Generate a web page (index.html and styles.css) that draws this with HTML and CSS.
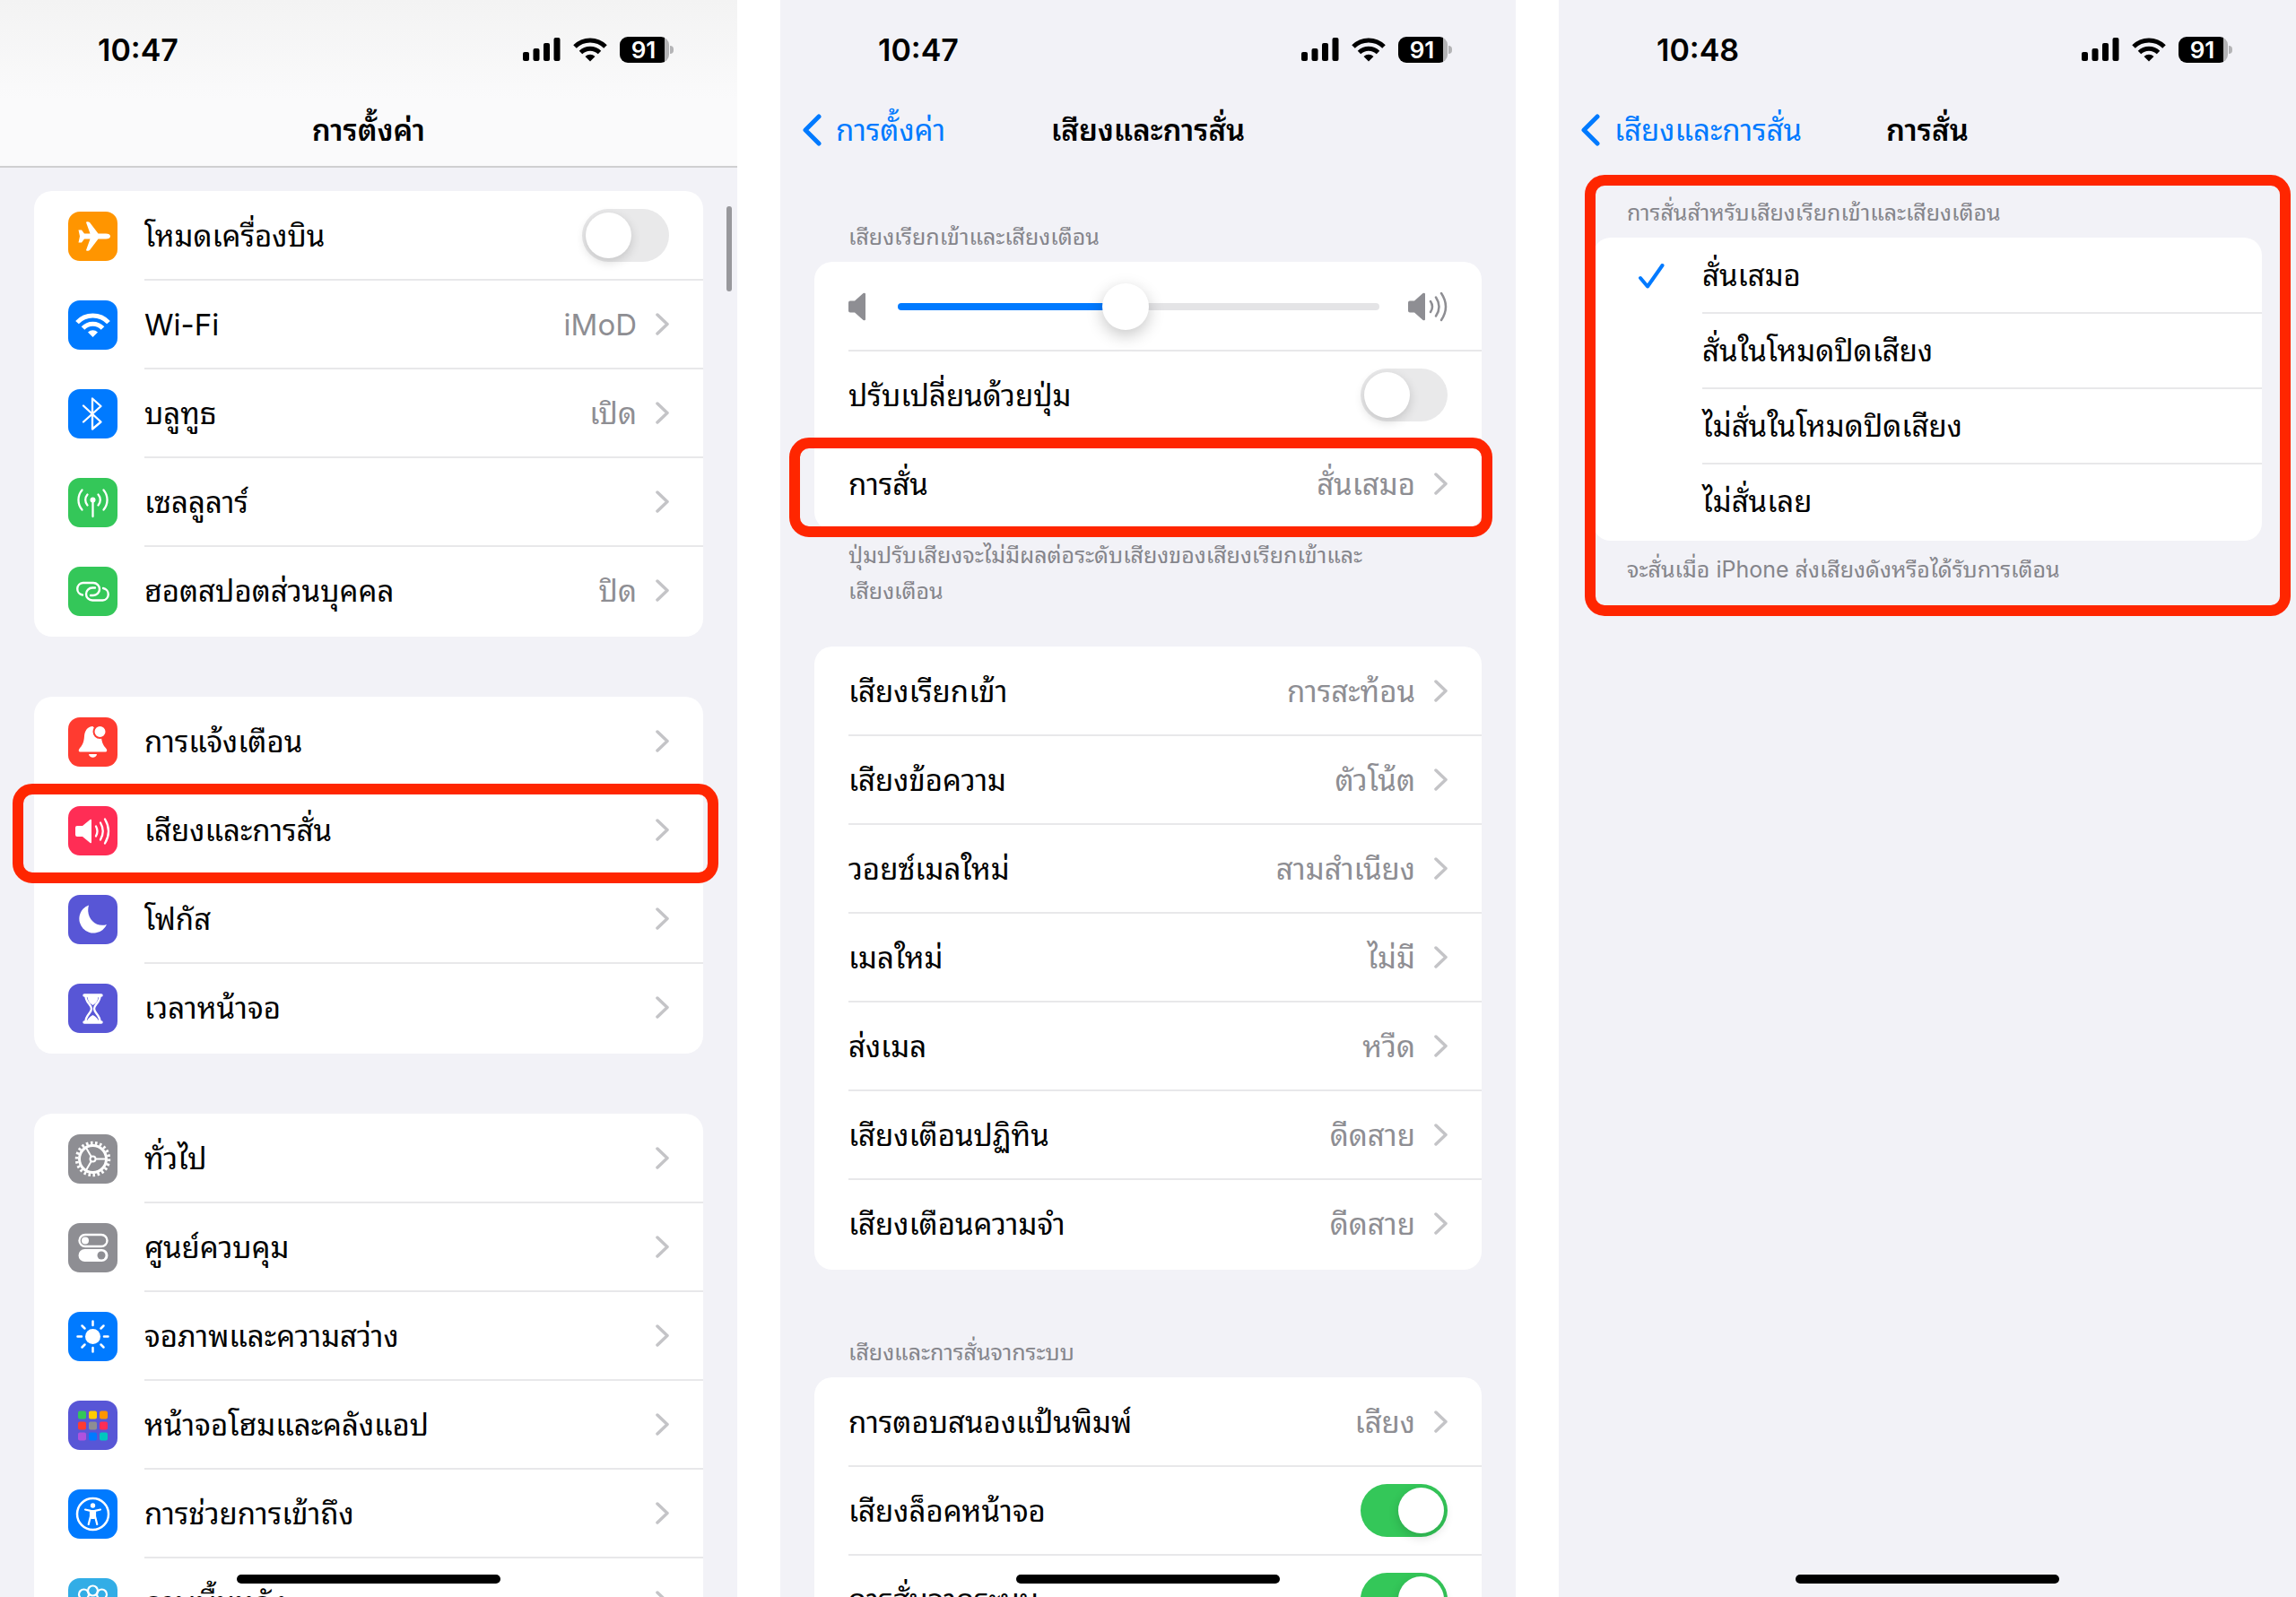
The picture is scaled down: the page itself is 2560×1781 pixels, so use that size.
FILE: index.html
```html
<!DOCTYPE html>
<html lang="th">

<head>
    <meta charset="UTF-8">
    <meta name="viewport" content="width=device-width, initial-scale=1.0">
    <title>การตั้งค่า - เสียงและการสั่น</title>
    <link rel="stylesheet" href="styles.css">
</head>

<body>
    <!-- Shared icons -->
    <svg class="sprite" aria-hidden="true">
        <symbol id="signal" viewBox="0 0 42 27">
            <rect x="0" y="16" width="7" height="10" rx="2" />
            <rect x="11.5" y="12" width="7" height="14" rx="2" />
            <rect x="23" y="6" width="7" height="20" rx="2" />
            <rect x="34.5" y="0" width="7" height="26" rx="2" />
        </symbol>
        <symbol id="wifi" viewBox="0 0 38 27">
            <g fill="none" stroke="currentColor" stroke-width="5">
                <path d="M2 10A24 24 0 0 1 36 10" />
                <path d="M8.5 16.5A15 15 0 0 1 29.5 16.5" />
            </g>
            <path d="M19 26.5l-5.5-5.5a8 8 0 0 1 11 0z" />
        </symbol>
        <symbol id="chevron" viewBox="0 0 15 25">
            <path d="M2 2l11 10.5L2 23" fill="none" stroke="currentColor" stroke-width="3.5" stroke-linecap="round" stroke-linejoin="round" />
        </symbol>
        <symbol id="back" viewBox="0 0 22 36">
            <path d="M19 3L4 18l15 15" fill="none" stroke="currentColor" stroke-width="5" stroke-linecap="round" stroke-linejoin="round" />
        </symbol>
    </svg>

    <main class="screens">
        <section class="screen">
            <header class="top-bar top-bar-scrolled">
                <div class="status">
                    <span class="time">10:47</span>
                    <span class="status-icons">
                        <svg class="signal"><use href="#signal" /></svg>
                        <svg class="wifi"><use href="#wifi" /></svg>
                        <span class="battery">91</span>
                    </span>
                </div>
                <nav class="nav">
                    <h1>การตั้งค่า</h1>
                </nav>
            </header>

            <div class="content content-main">
                <div class="card">
                    <label class="row">
                        <svg class="icon orange" viewBox="0 0 55 55"><path d="M47 27.5c0 2-2 3-5 3h-8.5l-9.5 12.5c-1 1-4 1-4 0l4.5-12.5h-6.5l-3 4h-3.5l1.5-7-1.5-7h3.5l3 4h6.5l-4.5-12.5c0-1 3-1 4 0l9.5 12.5h8.5c3 0 5 1 5 3z" /></svg>
                        <span class="row-body">โหมดเครื่องบิน <input class="switch" type="checkbox"></span>
                    </label>
                    <a class="row" href="#">
                        <svg class="icon blue" viewBox="0 0 55 55"><g fill="none" stroke="#fff" stroke-width="5"><path d="M10 24.6A24 24 0 0 1 45 24.6" /><path d="M16.5 31A15 15 0 0 1 38.5 31" /></g><path d="M27.5 41l-5.5-5.6a8 8 0 0 1 11 0z" /></svg>
                        <span class="row-body">Wi-Fi <span class="value">iMoD</span><svg class="chevron"><use href="#chevron" /></svg></span>
                    </a>
                    <a class="row" href="#">
                        <svg class="icon blue" viewBox="0 0 55 55"><path d="M17 18.5L36.5 36.5 27 44.5v-34l9.5 8.5L17 36.5" fill="none" stroke="#fff" stroke-width="2.3" stroke-linejoin="round" stroke-linecap="round" /></svg>
                        <span class="row-body">บลูทูธ <span class="value">เปิด</span><svg class="chevron"><use href="#chevron" /></svg></span>
                    </a>
                    <a class="row" href="#">
                        <svg class="icon green" viewBox="0 0 55 55"><circle cx="27.5" cy="24.5" r="3" /><path d="M27.5 25v18M21.5 18.5a9 9 0 0 0 0 12M15.5 13.5a17 17 0 0 0 0 22M33.5 18.5a9 9 0 0 1 0 12M39.5 13.5a17 17 0 0 1 0 22" fill="none" stroke="#fff" stroke-width="2.3" stroke-linecap="round" /></svg>
                        <span class="row-body">เซลลูลาร์ <svg class="chevron"><use href="#chevron" /></svg></span>
                    </a>
                    <a class="row" href="#">
                        <svg class="icon green" viewBox="0 0 55 55"><path d="M16 31.5A6.8 6.8 0 0 1 16.5 18h11.5a7 7 0 0 1 0 14h-3M39 24a6.8 6.8 0 0 1-.5 13.5H27a7 7 0 0 1 0-14h3" fill="none" stroke="#fff" stroke-width="2.4" stroke-linecap="round" /></svg>
                        <span class="row-body">ฮอตสปอตส่วนบุคคล <span class="value">ปิด</span><svg class="chevron"><use href="#chevron" /></svg></span>
                    </a>
                </div>

                <div class="card">
                    <a class="row" href="#">
                        <svg class="icon red" viewBox="0 0 55 55"><path d="M27.5 10c-6 0-9 5-9.5 11-.5 8-3 11-5.5 14-1.5 2-.5 3.5 1 3.5h28c1.5 0 2.5-1.5 1-3.5-2.5-3-5-6-5.5-13z" /><path d="M23 41h9c-.5 5-8.5 5-9 0z" /><circle cx="35.5" cy="16" r="7" fill="#fff" stroke="#ff3b30" stroke-width="2" /></svg>
                        <span class="row-body">การแจ้งเตือน <svg class="chevron"><use href="#chevron" /></svg></span>
                    </a>
                    <a class="row row-marked" href="#">
                        <svg class="icon pink" viewBox="0 0 55 55"><path d="M10 22h6l8.5-7q1.5-1 1.5 1v24q0 2-1.5 1l-8.5-7h-6q-2 0-2-2v-8q0-2 2-2z" /><path d="M31 22.5q3 5.5 0 11M36 18.5q5.5 9.5 0 19M41 14.5q8 13.5 0 27" fill="none" stroke="#fff" stroke-width="2.3" stroke-linecap="round" /></svg>
                        <span class="row-body">เสียงและการสั่น <svg class="chevron"><use href="#chevron" /></svg></span>
                        <span class="marker marker-row"></span>
                    </a>
                    <a class="row" href="#">
                        <svg class="icon indigo" viewBox="0 0 55 55"><path d="M23 11.5A16 16 0 1 0 43 33C31 37 19 26 23 11.5z" /></svg>
                        <span class="row-body">โฟกัส <svg class="chevron"><use href="#chevron" /></svg></span>
                    </a>
                    <a class="row" href="#">
                        <svg class="icon indigo" viewBox="0 0 55 55"><path d="M18 13h19M18 43h19" stroke="#fff" stroke-width="3.5" stroke-linecap="round" /><path d="M19.5 14c0 7 6.5 9.5 6.5 14s-6.5 7-6.5 14h16c0-7-6.5-9.5-6.5-14s6.5-7 6.5-14z" fill="none" stroke="#fff" stroke-width="2.4" /><path d="M21.500 14h12q0 7-6 10-6-3-6-10zM21 42q1-4 6.500-7 5.500 3 6.500 7z" /></svg>
                        <span class="row-body">เวลาหน้าจอ <svg class="chevron"><use href="#chevron" /></svg></span>
                    </a>
                </div>

                <div class="card">
                    <a class="row" href="#">
                        <svg class="icon gray" viewBox="0 0 55 55"><g fill="none" stroke="#fff"><circle cx="27.5" cy="27.5" r="15" stroke-width="3" /><circle cx="27.5" cy="27.5" r="18" stroke-width="3.5" pathLength="88" stroke-dasharray="2 2" /><circle cx="27.5" cy="27.5" r="3" stroke-width="2" /><path d="M31 27.5h11M25.5 24.5l-5.5-9.5M25.5 30.5l-5.5 9.5" stroke-width="2" /></g></svg>
                        <span class="row-body">ทั่วไป <svg class="chevron"><use href="#chevron" /></svg></span>
                    </a>
                    <a class="row" href="#">
                        <svg class="icon gray" viewBox="0 0 55 55"><rect x="12.5" y="13" width="31" height="13" rx="6.5" fill="none" stroke="#fff" stroke-width="2.4" /><circle cx="19" cy="19.5" r="4" /><rect x="11.5" y="29" width="33" height="14" rx="7" /><circle cx="37" cy="36" r="4.5" fill="#8e8e93" /></svg>
                        <span class="row-body">ศูนย์ควบคุม <svg class="chevron"><use href="#chevron" /></svg></span>
                    </a>
                    <a class="row" href="#">
                        <svg class="icon blue" viewBox="0 0 55 55"><circle cx="27.5" cy="27.5" r="8.5" /><path d="M27.5 10.5v4.5M27.5 40v4.5M10.5 27.5h4.5M40 27.5h4.5M15.5 15.5l3 3M36.5 36.5l3 3M15.5 39.5l3-3M36.5 18.5l3-3" stroke="#fff" stroke-width="2.5" stroke-linecap="round" /></svg>
                        <span class="row-body">จอภาพและความสว่าง <svg class="chevron"><use href="#chevron" /></svg></span>
                    </a>
                    <a class="row" href="#">
                        <svg class="icon indigo" viewBox="0 0 55 55">
                            <rect x="11" y="11.5" width="9" height="9" rx="2" fill="#34c759" />
                            <rect x="23" y="11.5" width="9" height="9" rx="2" fill="#ffcc00" />
                            <rect x="35" y="11.5" width="9" height="9" rx="2" fill="#ff9500" />
                            <rect x="11" y="23.5" width="9" height="9" rx="2" fill="#ff3b30" />
                            <rect x="23" y="23.5" width="9" height="9" rx="2" fill="#8e8e93" />
                            <rect x="35" y="23.5" width="9" height="9" rx="2" fill="#ff2d55" />
                            <rect x="11" y="35.5" width="9" height="9" rx="2" fill="#af52de" />
                            <rect x="23" y="35.5" width="9" height="9" rx="2" fill="#007aff" />
                            <rect x="35" y="35.5" width="9" height="9" rx="2" fill="#00c7be" />
                        </svg>
                        <span class="row-body">หน้าจอโฮมและคลังแอป <svg class="chevron"><use href="#chevron" /></svg></span>
                    </a>
                    <a class="row" href="#">
                        <svg class="icon blue" viewBox="0 0 55 55"><circle cx="27.5" cy="27.5" r="17.5" fill="none" stroke="#fff" stroke-width="2.5" /><circle cx="27.5" cy="18" r="2.7" /><path d="M19 22.5l6 1.3v6.2l-2.3 9M36 22.5l-6 1.3v6.2l2.3 9" fill="none" stroke="#fff" stroke-width="2.2" stroke-linecap="round" stroke-linejoin="round" /><path d="M24 23h7v7l-1.5 3h-4l-1.5-3z" /></svg>
                        <span class="row-body">การช่วยการเข้าถึง <svg class="chevron"><use href="#chevron" /></svg></span>
                    </a>
                    <a class="row" href="#">
                        <svg class="icon cyan" viewBox="0 0 55 55"><g fill="none" stroke="#fff" stroke-width="2.2"><circle cx="27.5" cy="14" r="5.5" /><circle cx="37.5" cy="18" r="5.5" /><circle cx="41" cy="27.5" r="5.5" /><circle cx="37.5" cy="37.5" r="5.5" /><circle cx="27.5" cy="41" r="5.5" /><circle cx="17.5" cy="37.5" r="5.5" /><circle cx="14" cy="27.5" r="5.5" /><circle cx="17.5" cy="18" r="5.5" /></g></svg>
                        <span class="row-body">ภาพพื้นหลัง <svg class="chevron"><use href="#chevron" /></svg></span>
                    </a>
                </div>
            </div>
            <span class="scroll-thumb"></span>
            <span class="home-bar"></span>
        </section>

        <section class="screen">
            <header class="top-bar">
                <div class="status">
                    <span class="time">10:47</span>
                    <span class="status-icons">
                        <svg class="signal"><use href="#signal" /></svg>
                        <svg class="wifi"><use href="#wifi" /></svg>
                        <span class="battery">91</span>
                    </span>
                </div>
                <nav class="nav">
                    <a class="back" href="#"><svg class="back-icon"><use href="#back" /></svg>การตั้งค่า</a>
                    <h1>เสียงและการสั่น</h1>
                </nav>
            </header>

            <div class="content content-sounds">
                <h2 class="caption">เสียงเรียกเข้าและเสียงเตือน</h2>
                <div class="card">
                    <div class="row">
                        <div class="row-body volume">
                            <svg class="speaker-low" viewBox="0 0 20 32"><path d="M2 9.5h5l9.500-8.500q2.500-1 2.500 1v28q0 2-2.500 1l-9.500-8.500h-5q-2 0-2-2v-9q0-2 2-2z" /></svg>
                            <input class="slider" type="range" min="0" max="100" value="47" aria-label="เสียงเรียกเข้าและเสียงเตือน">
                            <svg class="speaker-high" viewBox="0 0 44 34"><path d="M2 10.5h5l9.500-8.500q2.500-1 2.500 1v28q0 2-2.500 1l-9.500-8.500h-5q-2 0-2-2v-9q0-2 2-2z" /><path d="M25 11q4 6 0 12M31 6.5q7 10.5 0 21M37 2q10 15 0 30" fill="none" stroke="#8e8e93" stroke-width="2.5" stroke-linecap="round" /></svg>
                        </div>
                    </div>
                    <label class="row">
                        <span class="row-body">ปรับเปลี่ยนด้วยปุ่ม <input class="switch" type="checkbox"></span>
                    </label>
                    <a class="row row-marked" href="#">
                        <span class="row-body">การสั่น <span class="value">สั่นเสมอ</span><svg class="chevron"><use href="#chevron" /></svg></span>
                        <span class="marker marker-row marker-wide"></span>
                    </a>
                </div>
                <p class="note">ปุ่มปรับเสียงจะไม่มีผลต่อระดับเสียงของเสียงเรียกเข้าและ<br>เสียงเตือน</p>

                <div class="card">
                    <a class="row" href="#"><span class="row-body">เสียงเรียกเข้า <span class="value">การสะท้อน</span><svg class="chevron"><use href="#chevron" /></svg></span></a>
                    <a class="row" href="#"><span class="row-body">เสียงข้อความ <span class="value">ตัวโน้ต</span><svg class="chevron"><use href="#chevron" /></svg></span></a>
                    <a class="row" href="#"><span class="row-body">วอยซ์เมลใหม่ <span class="value">สามสำเนียง</span><svg class="chevron"><use href="#chevron" /></svg></span></a>
                    <a class="row" href="#"><span class="row-body">เมลใหม่ <span class="value">ไม่มี</span><svg class="chevron"><use href="#chevron" /></svg></span></a>
                    <a class="row" href="#"><span class="row-body">ส่งเมล <span class="value">หวืด</span><svg class="chevron"><use href="#chevron" /></svg></span></a>
                    <a class="row" href="#"><span class="row-body">เสียงเตือนปฏิทิน <span class="value">ดีดสาย</span><svg class="chevron"><use href="#chevron" /></svg></span></a>
                    <a class="row" href="#"><span class="row-body">เสียงเตือนความจำ <span class="value">ดีดสาย</span><svg class="chevron"><use href="#chevron" /></svg></span></a>
                </div>

                <h2 class="caption caption-next">เสียงและการสั่นจากระบบ</h2>
                <div class="card">
                    <a class="row" href="#"><span class="row-body">การตอบสนองแป้นพิมพ์ <span class="value">เสียง</span><svg class="chevron"><use href="#chevron" /></svg></span></a>
                    <label class="row"><span class="row-body">เสียงล็อคหน้าจอ <input class="switch" type="checkbox" checked></span></label>
                    <label class="row"><span class="row-body">การสั่นจากระบบ <input class="switch" type="checkbox" checked></span></label>
                </div>
            </div>
            <span class="home-bar"></span>
        </section>

        <section class="screen">
            <header class="top-bar">
                <div class="status">
                    <span class="time">10:48</span>
                    <span class="status-icons">
                        <svg class="signal"><use href="#signal" /></svg>
                        <svg class="wifi"><use href="#wifi" /></svg>
                        <span class="battery">91</span>
                    </span>
                </div>
                <nav class="nav">
                    <a class="back" href="#"><svg class="back-icon"><use href="#back" /></svg>เสียงและการสั่น</a>
                    <h1>การสั่น</h1>
                </nav>
            </header>

            <div class="content content-haptics">
                <h2 class="caption">การสั่นสำหรับเสียงเรียกเข้าและเสียงเตือน</h2>
                <div class="card">
                    <label class="option"><input type="radio" name="haptics" checked><svg class="check" viewBox="0 0 29 28"><path d="M2 16l8 9.5L26.5 2" /></svg><span class="option-body">สั่นเสมอ</span></label>
                    <label class="option"><input type="radio" name="haptics"><svg class="check" viewBox="0 0 29 28"><path d="M2 16l8 9.5L26.5 2" /></svg><span class="option-body">สั่นในโหมดปิดเสียง</span></label>
                    <label class="option"><input type="radio" name="haptics"><svg class="check" viewBox="0 0 29 28"><path d="M2 16l8 9.5L26.5 2" /></svg><span class="option-body">ไม่สั่นในโหมดปิดเสียง</span></label>
                    <label class="option"><input type="radio" name="haptics"><svg class="check" viewBox="0 0 29 28"><path d="M2 16l8 9.5L26.5 2" /></svg><span class="option-body">ไม่สั่นเลย</span></label>
                </div>
                <p class="note">จะสั่นเมื่อ iPhone ส่งเสียงดังหรือได้รับการเตือน</p>
                <span class="marker marker-group"></span>
            </div>
            <span class="home-bar"></span>
        </section>
    </main>
</body>

</html>
```
FILE: styles.css
```css
* {
    box-sizing: border-box;
}

body {
    margin: 0;
    background: #fff;
    color: #000;
    font-family: Inter, "Noto Sans Thai Looped", sans-serif;
    font-size: 33px;
    line-height: 48px;
}

h1,
h2,
p {
    margin: 0;
}

a {
    color: inherit;
    text-decoration: none;
}

.sprite {
    display: none;
}

.screens {
    display: grid;
    grid-template-columns: 411fr 410fr 411fr;
    gap: 48px;
    height: 100vh;
    overflow: hidden;
}

.screen {
    position: relative;
    overflow: hidden;
    background: #f2f2f7;
}

/* Status bar and title */
.top-bar {
    height: 187px;
}

.top-bar-scrolled {
    background: linear-gradient(#f3f3f3, #fafafb 60%);
    border-bottom: 2px solid #cfcfd1;
}

.status {
    display: flex;
    align-items: center;
    justify-content: space-between;
    height: 111px;
    padding: 0 71px 0 109px;
}

.time {
    font-size: 34px;
    font-weight: 600;
}

.status-icons {
    display: flex;
    align-items: center;
    gap: 14px;
}

.signal {
    width: 42px;
    height: 27px;
}

.wifi {
    width: 38px;
    height: 27px;
}

.battery {
    position: relative;
    width: 55px;
    margin-right: 5px;
    padding-right: 2px;
    border-radius: 9px;
    background: linear-gradient(to right, #000 50px, #b4b4b6 50px);
    color: #fff;
    font-size: 26px;
    font-weight: 600;
    line-height: 29px;
    text-align: center;
}

.battery::after {
    content: "";
    position: absolute;
    left: 56px;
    top: 10px;
    width: 4px;
    height: 9px;
    border-radius: 0 4px 4px 0;
    background: #b4b4b6;
}

.nav {
    display: grid;
    grid-template-columns: 1fr auto 1fr;
    align-items: center;
    height: 68px;
    padding: 0 24px;
}

.nav h1 {
    grid-column: 2;
    font-size: 33px;
    font-weight: 600;
}

.back {
    display: flex;
    align-items: center;
    gap: 16px;
    color: #007aff;
}

.back-icon {
    width: 22px;
    height: 36px;
}

/* Lists */
.content {
    position: relative;
    padding: 0 38px;
}

.content-main {
    display: flex;
    flex-direction: column;
    gap: 67px;
    padding-top: 26px;
}

.content-sounds {
    padding-top: 57px;
}

.content-haptics {
    padding-top: 30px;
}

.card {
    padding: 1px 0;
    border-radius: 20px;
    background: #fff;
}

.row {
    position: relative;
    display: flex;
    align-items: center;
    gap: 30px;
    padding-left: 38px;
}

.row-marked {
    z-index: 1;
}

.row-body {
    display: flex;
    flex: 1;
    align-items: center;
    justify-content: space-between;
    height: 99px;
    padding-right: 38px;
    border-bottom: 2px solid #e8e8ea;
}

.row:last-child .row-body,
.option:last-child .option-body {
    border-bottom-color: transparent;
}

.icon {
    width: 55px;
    height: 55px;
    border-radius: 13px;
    fill: #fff;
}

.orange {
    background: #ff9500;
}

.blue {
    background: #007aff;
}

.green {
    background: #34c759;
}

.red {
    background: #ff3b30;
}

.pink {
    background: #ff2d55;
}

.indigo {
    background: #5856d6;
}

.gray {
    background: #8e8e93;
}

.cyan {
    background: #32ade6;
}

.value {
    margin-left: auto;
    margin-right: 21px;
    color: #8e8e93;
}

.chevron {
    width: 15px;
    height: 25px;
    color: #c4c4c7;
}

.caption,
.note {
    padding: 0 38px;
    color: #85858b;
    font-size: 25px;
    font-weight: 400;
    line-height: 40px;
}

.caption {
    margin-bottom: 8px;
}

.caption-next {
    margin-top: 72px;
}

.note {
    margin: 8px 0 42px;
}

.content-haptics .note {
    margin: 12px 0 0;
}

/* Controls */
.switch {
    appearance: none;
    width: 97px;
    height: 59px;
    margin: 0;
    padding: 4px;
    border-radius: 30px;
    background: #e9e9ea;
}

.switch::before {
    content: "";
    display: block;
    width: 51px;
    height: 51px;
    border-radius: 50%;
    background: #fff;
    box-shadow: 0 4px 12px rgba(0, 0, 0, 0.16);
}

.switch:checked {
    background: #34c759;
}

.switch:checked::before {
    margin-left: auto;
}

.volume svg {
    fill: #8e8e93;
}

.speaker-low {
    width: 20px;
    height: 32px;
}

.speaker-high {
    width: 44px;
    height: 34px;
}

.slider {
    appearance: none;
    flex: 1;
    height: 8px;
    margin: 0 32px 0 35px;
    border-radius: 4px;
    background: linear-gradient(to right, #007aff 47%, #e4e4e6 47%);
}

.slider::-webkit-slider-thumb {
    appearance: none;
    width: 52px;
    height: 52px;
    border-radius: 50%;
    background: #fff;
    box-shadow: 0 6px 18px rgba(0, 0, 0, 0.22);
}

.option {
    display: flex;
    align-items: center;
    padding-left: 51px;
}

.option input {
    appearance: none;
    width: 0;
    height: 0;
    margin: 0;
}

.check {
    width: 29px;
    height: 28px;
    margin-right: 42px;
    fill: none;
    stroke: #007aff;
    stroke-width: 4;
    stroke-linecap: round;
    stroke-linejoin: round;
    visibility: hidden;
}

.option input:checked + .check {
    visibility: visible;
}

.option-body {
    display: flex;
    flex: 1;
    align-items: center;
    height: 84px;
    border-bottom: 2px solid #e8e8ea;
}

/* Red frames around the steps to follow */
.marker {
    position: absolute;
    border: 12px solid #ff2600;
    border-radius: 22px;
    pointer-events: none;
}

.marker-row {
    inset: -3px -17px -9px -24px;
}

.marker-wide {
    inset: -3px -12px -9px -28px;
}

.marker-group {
    inset: 8px 6px -32px 29px;
}

.scroll-thumb {
    position: absolute;
    top: 230px;
    right: 6px;
    width: 6px;
    height: 95px;
    border-radius: 3px;
    background: #98989c;
}

.home-bar {
    position: absolute;
    bottom: 15px;
    left: 50%;
    width: 294px;
    height: 10px;
    border-radius: 5px;
    background: #000;
    transform: translateX(-50%);
}
```
